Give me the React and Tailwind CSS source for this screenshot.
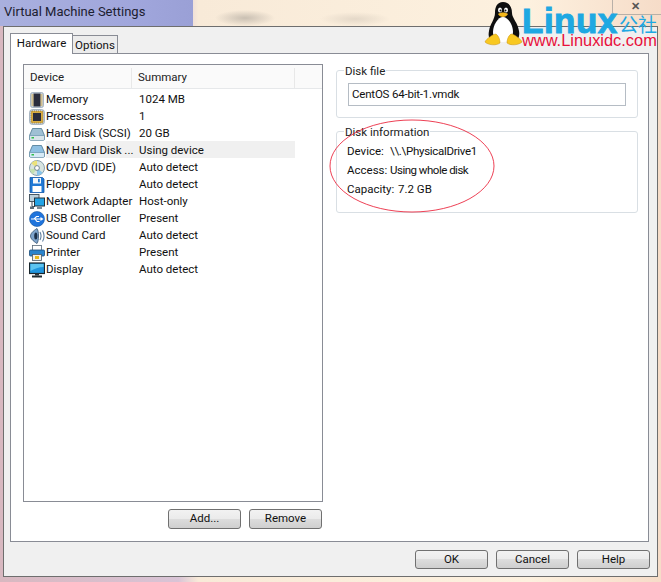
import React from 'react';

const font = "font-['Roboto','Liberation_Sans',sans-serif]";

const Chip = () => (
    <svg width="16" height="16" viewBox="0 0 16 16">
        <rect x="1.500" y="0.500" width="13" height="15" rx="2" fill="#c8d2dc" stroke="#8fa0b0" strokeWidth="0.7" />
        <rect x="4.500" y="1.500" width="7" height="13" fill="#2a2c3c" />
        <path d="M2.500 3h2M2.500 5h2M2.500 7h2M2.500 9h2M2.500 11h2M2.500 13h2M11.500 3h2M11.500 5h2M11.500 7h2M11.500 9h2M11.500 11h2M11.500 13h2" stroke="#d8a83a" strokeWidth="1" />
    </svg>
);

const Cpu = () => (
    <svg width="16" height="16" viewBox="0 0 16 16">
        <rect x="0.500" y="0.500" width="15" height="15" rx="3" fill="#c8d2dc" stroke="#8fa0b0" strokeWidth="0.7" />
        <rect x="2" y="2" width="12" height="12" rx="1" fill="#d8ac42" stroke="#8a7030" strokeWidth="0.8" strokeDasharray="1 1" />
        <rect x="4" y="4" width="8" height="8" fill="#2a2c3c" />
    </svg>
);

const Disk = ({ light }) => (
    <svg width="16" height="16" viewBox="0 0 16 16">
        <path d="M3.500 2.500h9l3 7v3.500a1.200 1.200 0 0 1-1.200 1.200H1.700A1.200 1.200 0 0 1 0.500 13V9.500z" fill={light ? '#8fc0e2' : '#9fc0d4'} stroke="#4a7690" strokeWidth="0.8" />
        <path d="M0.800 9.500h14.400v3.500a1 1 0 0 1-1 1H1.800a1 1 0 0 1-1-1z" fill={light ? '#d6eaf6' : '#d8e4ea'} />
        <path d="M0.800 9.500h14.400" stroke="#5c8aa6" strokeWidth="0.6" />
        <rect x="2.500" y="11" width="2.500" height="1.500" fill="#2fc04a" />
    </svg>
);

const Cd = () => (
    <svg width="16" height="16" viewBox="0 0 16 16">
        <circle cx="8" cy="8" r="7.500" fill="#d8e4e0" stroke="#6f8a9a" strokeWidth="0.8" />
        <path d="M8 8L2.300 3.200A7.400 7.400 0 0 1 8 0.600z" fill="#ece27a" />
        <path d="M8 8l5.700 4.800A7.400 7.400 0 0 1 8 15.400z" fill="#88c4ea" />
        <path d="M8 8L0.800 9.500A7.400 7.400 0 0 0 4 14.200z" fill="#c4e0b0" />
        <circle cx="8" cy="8" r="2.400" fill="#ffffff" stroke="#5a6f80" strokeWidth="0.8" />
    </svg>
);

const Floppy = () => (
    <svg width="16" height="16" viewBox="0 0 16 16">
        <path d="M1 0.500h12.500L15 2v13.500H1z" fill="#1f78d4" stroke="#1358a8" strokeWidth="0.8" />
        <rect x="4" y="1" width="8" height="5.500" fill="#f2f6fa" />
        <rect x="3.500" y="9" width="9" height="6" fill="#ffffff" />
        <rect x="9" y="1.800" width="1.800" height="3.500" fill="#1f78d4" />
    </svg>
);

const Network = () => (
    <svg width="16" height="16" viewBox="0 0 16 16">
        <rect x="0.500" y="0.500" width="9.500" height="7" fill="#bcd0dc" stroke="#3c4a56" strokeWidth="0.9" />
        <path d="M3 8v4.500h3" stroke="#3c4a56" fill="none" />
        <rect x="1" y="12.500" width="4" height="2.500" fill="#5c6c78" />
        <rect x="5.500" y="4" width="10" height="8" fill="#24a4e6" stroke="#24343f" strokeWidth="1" />
        <rect x="8" y="12.500" width="5" height="2.500" fill="#7a8a96" />
    </svg>
);

const Usb = () => (
    <svg width="16" height="16" viewBox="0 0 16 16">
        <circle cx="8" cy="8" r="7.500" fill="#1f74dc" stroke="#14549e" strokeWidth="0.6" />
        <path d="M2 8h10M5 8l2.500-2.500H10M6 8l2 2.500h2.500" stroke="#ffffff" strokeWidth="1.100" fill="none" />
        <path d="M11.500 6l3 2-3 2z" fill="#ffffff" />
    </svg>
);

const Sound = () => (
    <svg width="16" height="16" viewBox="0 0 16 16">
        <path d="M8 0.500C4 3 1.500 5.500 1.500 8s2.500 5 6.500 7.500c2-2.500 2-12.500 0-15z" fill="#7ea4cc" stroke="#33506e" strokeWidth="0.8" />
        <ellipse cx="6.800" cy="8" rx="1.600" ry="3.500" fill="#1c3048" />
        <path d="M11 4c1.300 2.500 1.300 5.500 0 8M13.500 2.500c2 3.500 2 7.500 0 11" stroke="#5f7f9f" strokeWidth="1.100" fill="none" />
    </svg>
);

const Printer = () => (
    <svg width="16" height="16" viewBox="0 0 16 16">
        <rect x="3.500" y="0.500" width="9" height="5" fill="#ffffff" stroke="#5a6a78" strokeWidth="0.8" />
        <rect x="0.500" y="5" width="15" height="6" rx="1" fill="#2a84cc" stroke="#1c4c78" strokeWidth="0.8" />
        <rect x="3.500" y="9.500" width="9" height="6" fill="#f2f2ea" stroke="#4a5a68" strokeWidth="0.8" />
        <rect x="6" y="11" width="4" height="3" fill="#e8b81e" />
    </svg>
);

const Display = () => (
    <svg width="16" height="16" viewBox="0 0 16 16">
        <rect x="0.500" y="1" width="15" height="10.500" fill="#1f95de" stroke="#1a262c" strokeWidth="1.200" />
        <path d="M1.500 2h13v3C10 5 5 7 1.500 9z" fill="#5cc4f0" />
        <rect x="6" y="11.500" width="4" height="2" fill="#26343c" />
        <rect x="3" y="13.500" width="10" height="2" fill="#1e2a30" />
    </svg>
);

const devices = [
    { icon: <Chip />, name: 'Memory', summary: '1024 MB' },
    { icon: <Cpu />, name: 'Processors', summary: '1' },
    { icon: <Disk />, name: 'Hard Disk (SCSI)', summary: '20 GB' },
    { icon: <Disk light />, name: 'New Hard Disk ...', summary: 'Using device', selected: true },
    { icon: <Cd />, name: 'CD/DVD (IDE)', summary: 'Auto detect' },
    { icon: <Floppy />, name: 'Floppy', summary: 'Auto detect' },
    { icon: <Network />, name: 'Network Adapter', summary: 'Host-only' },
    { icon: <Usb />, name: 'USB Controller', summary: 'Present' },
    { icon: <Sound />, name: 'Sound Card', summary: 'Auto detect' },
    { icon: <Printer />, name: 'Printer', summary: 'Present' },
    { icon: <Display />, name: 'Display', summary: 'Auto detect' },
];

const Button = ({ children, className }) => (
    <button className={`rounded-[3px] border border-[#707070] bg-[linear-gradient(#f2f2f2_0%,#ebebeb_48%,#dddddd_50%,#cfcfcf_100%)] text-[11.5px] leading-none text-[#111] ${className}`}>
        {children}
    </button>
);

const Group = ({ title, className, children }) => (
    <div className={`relative rounded-[3px] border border-[#d9dfe4] ${className}`}>
        <span className="absolute left-[7px] top-[-7px] bg-white px-[1px] text-[11.5px] leading-[14px] text-[#222]">{title}</span>
        {children}
    </div>
);

export default function App() {
    return (
        <div className={`relative h-[582px] w-[661px] overflow-hidden bg-[linear-gradient(90deg,#d8b8c0_0%,#d9c4d6_27%,#f8ead8_30%,#fdf1df_80%,#f6dcc8_100%)] ${font}`}>
            <div className="absolute left-0 top-0 h-[26px] w-[193px] bg-[linear-gradient(90deg,#a9b0de_0%,#a0a6dc_70%,#9aa0d6_100%)]" />
            <div className="absolute left-[215px] top-[10px] h-[16px] w-[60px] bg-[radial-gradient(closest-side,#c9bfb2,transparent)]" />
            <div className="absolute left-[320px] top-[12px] h-[14px] w-[70px] bg-[radial-gradient(closest-side,#e4d8c8,transparent)]" />

            <div className="relative flex h-full flex-col pl-[3px] pr-[3px] pb-[5px]">
                <div className="flex h-[26px] shrink-0 items-center pl-[1px] pb-[2px] text-[13px] text-[#1c2030]">Virtual Machine Settings</div>

                <div className="flex min-h-0 flex-1 flex-col border border-[#6e6e6e] bg-[#f0f0f0] pl-[6px] pr-[8px] pt-[6px] pb-[7px]">
                    <div className="flex h-[21px] shrink-0 items-start">
                        <div className="relative z-10 flex h-[21px] w-[63px] items-center justify-center border border-b-0 border-[#898c95] bg-white text-[11.5px] text-[#111]">Hardware</div>
                        <div className="mt-[2px] flex h-[19px] w-[45px] items-center justify-center border border-l-0 border-[#898c95] bg-[#ececec] pt-[2px] text-[11.5px] text-[#111]">Options</div>
                    </div>

                    <div className="-mt-px flex min-h-0 flex-1 border border-[#898c95] bg-white pl-[12px] pr-[10px] pt-[10px]">
                        <div className="flex w-[300px] shrink-0 flex-col">
                            <div className="flex h-[438px] flex-col border border-[#898c95]">
                                <div className="flex h-[24px] shrink-0 border-b border-[#e6e8ea] bg-[#fafafa] pt-[3px] text-[11.5px] text-[#222]">
                                    <div className="flex w-[108px] items-center border-r border-[#e8e8e8] pl-[6px]">Device</div>
                                    <div className="flex w-[163px] items-center border-r border-[#e8e8e8] pl-[6px]">Summary</div>
                                    <div className="flex-1" />
                                </div>
                                <div className="pt-px">
                                    {devices.map((d) => (
                                        <div key={d.name} className="flex h-[17px] items-center text-[11.5px] text-[#111]">
                                            <div className="flex w-[22px] shrink-0 justify-center pl-[4px] pt-[2px]">{d.icon}</div>
                                            <div className={`flex h-full w-[249px] items-center pt-[2px] ${d.selected ? 'bg-[#f0f0f0]' : ''}`}>
                                                <span className="w-[93px] shrink-0 whitespace-nowrap">{d.name}</span>
                                                <span className="whitespace-nowrap">{d.summary}</span>
                                            </div>
                                        </div>
                                    ))}
                                </div>
                            </div>
                            <div className="mt-[7px] flex justify-end gap-[8px] pr-px">
                                <Button className="h-[20px] w-[73px]">Add...</Button>
                                <Button className="h-[20px] w-[73px]">Remove</Button>
                            </div>
                        </div>

                        <div className="ml-[13px] flex flex-1 flex-col pt-[6px]">
                            <Group title="Disk file" className="h-[48px] pl-[11px] pr-[11px] pt-[12px]">
                                <div className="flex h-[23px] items-center border border-[#b5bcc4] pl-[3px] text-[11.5px] tracking-[-0.2px] text-[#111]">CentOS 64-bit-1.vmdk</div>
                            </Group>
                            <Group title="Disk information" className="mt-[13px] h-[82px] pl-[10px] pt-[10px] text-[11.5px] text-[#111]">
                                <div className="flex h-[19px] items-center"><span className="w-[43px]">Device:</span><span className="tracking-[-0.3px]">\\.\PhysicalDrive1</span></div>
                                <div className="flex h-[19px] items-center"><span className="w-[43px]">Access:</span><span className="tracking-[-0.5px]">Using whole disk</span></div>
                                <div className="flex h-[19px] items-center"><span className="w-[51px]">Capacity:</span><span>7.2 GB</span></div>
                            </Group>
                        </div>
                    </div>

                    <div className="mt-[8px] -mr-px flex shrink-0 justify-end gap-[8px]">
                        <Button className="h-[19px] w-[73px]">OK</Button>
                        <Button className="h-[19px] w-[73px]">Cancel</Button>
                        <Button className="h-[19px] w-[73px]">Help</Button>
                    </div>
                </div>
            </div>

            <svg className="pointer-events-none absolute left-[329px] top-[119px]" width="166" height="95" viewBox="0 0 166 95">
                <ellipse cx="83" cy="47" rx="82" ry="46" fill="none" stroke="#e8102a" strokeWidth="0.8" />
            </svg>

            <div className="absolute left-[612px] top-0 h-[15px] w-[49px] rounded-bl-[3px] border-b border-l border-[#b8b0a8] pr-[3px] text-center text-[11px] font-bold leading-[14px] text-[#555]">✕</div>

            <svg className="absolute left-[484px] top-[1px]" width="40" height="46" viewBox="0 0 40 46">
                <path d="M19 1c6 0 9 5 9 11 0 5 6 10 7 18 1 5-1 9-3 10H8c-3-2-4-5-3-10 1-7 6-12 6-18C11 6 13 1 19 1z" fill="#0e0e0e" />
                <path d="M19 16c5 0 10 8 10 15 0 6-4 10-10 10S9 37 9 31c0-7 5-15 10-15z" fill="#ffffff" />
                <ellipse cx="16" cy="9" rx="2" ry="2.600" fill="#ffffff" />
                <ellipse cx="22" cy="9" rx="2" ry="2.600" fill="#ffffff" />
                <circle cx="16.500" cy="9.500" r="1" fill="#111" />
                <circle cx="21.500" cy="9.500" r="1" fill="#111" />
                <path d="M14 13c3-2 7-2 10 0-2 4-8 4-10 0z" fill="#f5b81c" />
                <path d="M1 41c1-3 8-8 11-8 3 2 4 6 4 9-4 3-12 2-15-1z" fill="#f8c820" stroke="#c89010" strokeWidth="0.5" />
                <path d="M38 41c-1-3-8-8-11-8-3 2-4 6-4 9 4 3 12 2 15-1z" fill="#f8c820" stroke="#c89010" strokeWidth="0.5" />
            </svg>
            <div className="absolute left-[522px] top-[9px] font-['Liberation_Sans',sans-serif] text-[35px] font-bold leading-[24px] tracking-[0.5px] text-[#1fa8e2] [-webkit-text-stroke:1px_#1fa8e2]">Linux</div>
            <div className="absolute left-[619px] top-[15px] font-['Noto_Sans_CJK_SC',sans-serif] text-[19px] leading-[18px] text-[#1fa8e2]">公社</div>
            <div className="absolute left-[522px] top-[34px] font-['Liberation_Sans',sans-serif] text-[16.4px] leading-[12px] text-[#e8103c]">www.Linuxidc.com</div>
        </div>
    );
}
